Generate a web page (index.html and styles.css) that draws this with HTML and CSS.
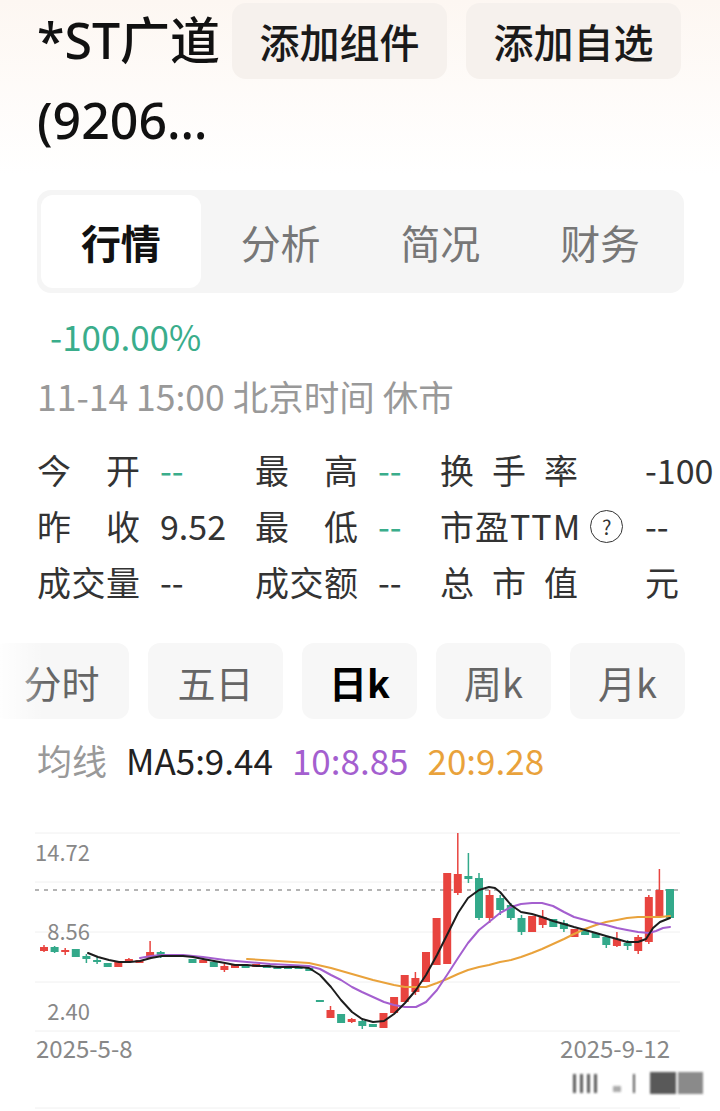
FILE: index.html
```html
<!DOCTYPE html>
<html>
    <head>
        <meta charset="utf-8">
        <title>*ST广道 行情</title>
        <link rel="stylesheet" href="styles.css">
    </head>
    <body>
        <div class="wrap">
            <div class="head">
                <div class="title" title="*ST广道(920680)">
                    <div class="name">*ST广道</div>
                    <div class="code">(9206…</div>
                </div>
                <div class="btn">添加组件</div>
                <div class="btn">添加自选</div>
            </div>

            <div class="tabs">
                <div class="tab on">行情</div>
                <div class="tab">分析</div>
                <div class="tab">简况</div>
                <div class="tab">财务</div>
            </div>

            <div class="change">-100.00%</div>
            <div class="time">11-14 15:00 北京时间 休市</div>

            <div class="stats">
                <span class="k">今开</span><span class="v down">--</span>
                <span class="k">最高</span><span class="v down">--</span>
                <span class="k k3">换手率</span><span class="v">-100</span>

                <span class="k">昨收</span><span class="v">9.52</span>
                <span class="k">最低</span><span class="v down">--</span>
                <span class="k k3 pe">市盈TTM<i class="help">?</i></span><span class="v">--</span>

                <span class="k">成交量</span><span class="v">--</span>
                <span class="k">成交额</span><span class="v">--</span>
                <span class="k k3">总市值</span><span class="v">元</span>
            </div>
        </div>

        <div class="periods">
            <div class="per wide">分时</div>
            <div class="per wide">五日</div>
            <div class="per on">日k</div>
            <div class="per">周k</div>
            <div class="per">月k</div>
        </div>

        <div class="ma">
            <span class="ma-label">均线</span>
            <span class="ma5">MA5:9.44</span>
            <span class="ma10">10:8.85</span>
            <span class="ma20">20:9.28</span>
        </div>

        <!-- chart drawn in page coordinates (viewBox starts at y=820) -->
        <svg class="chart" width="720" height="291" viewBox="0 820 720 291">
            <defs>
                <filter id="soft"><feGaussianBlur stdDeviation="1.3"/></filter>
            </defs>
            <g stroke="#f0f0f0" stroke-width="1">
                <line x1="35" y1="833" x2="680" y2="833"/>
                <line x1="35" y1="882" x2="680" y2="882"/>
                <line x1="35" y1="932" x2="680" y2="932"/>
                <line x1="35" y1="982" x2="680" y2="982"/>
                <line x1="35" y1="1031" x2="680" y2="1031"/>
                <line x1="35" y1="1108" x2="680" y2="1108"/>
            </g>
            <line x1="35" y1="890" x2="680" y2="890" stroke="#9c9c9c" stroke-width="1.5" stroke-dasharray="4 5"/>

            <g class="axis">
                <text x="90" y="861" text-anchor="end">14.72</text>
                <text x="90" y="940" text-anchor="end">8.56</text>
                <text x="90" y="1020" text-anchor="end">2.40</text>
                <text class="date" x="36" y="1058">2025-5-8</text>
                <text class="date" x="670" y="1058" text-anchor="end">2025-9-12</text>
            </g>

            <!-- rising candles -->
            <g fill="#e8443f" stroke="#e8443f" stroke-width="1.5">
                <line x1="44" y1="945" x2="44" y2="952"/><rect x="40" y="947" width="8" height="4" stroke="none"/>
                <line x1="65.2" y1="948" x2="65.2" y2="955"/><rect x="61.2" y="950" width="8" height="2" stroke="none"/>
                <rect x="114.3" y="962" width="8" height="5" stroke="none"/>
                <line x1="128.9" y1="958" x2="128.9" y2="963"/><rect x="124.9" y="959" width="8" height="3" stroke="none"/>
                <rect x="135.5" y="960" width="8" height="3" stroke="none"/>
                <line x1="150.1" y1="941" x2="150.1" y2="958"/><rect x="146.1" y="952" width="8" height="6" stroke="none"/>
                <rect x="177.9" y="955" width="8" height="2" stroke="none"/>
                <rect x="199.2" y="960" width="8" height="3" stroke="none"/>
                <line x1="224.4" y1="964" x2="224.4" y2="972"/><rect x="220.4" y="966" width="8" height="4" stroke="none"/>
                <rect x="231" y="965" width="8" height="3" stroke="none"/>
                <rect x="252.2" y="964" width="8" height="3" stroke="none"/>
                <line x1="330.5" y1="1006" x2="330.5" y2="1018"/><rect x="326.5" y="1010" width="8" height="8" stroke="none"/>
                <line x1="351.7" y1="1018" x2="351.7" y2="1023"/><rect x="347.7" y="1019" width="8" height="3" stroke="none"/>
                <rect x="379.5" y="1013" width="8" height="15" stroke="none"/>
                <rect x="390.1" y="997" width="8" height="16" stroke="none"/>
                <rect x="400.7" y="975" width="8" height="27" stroke="none"/>
                <line x1="415.4" y1="972" x2="415.4" y2="995"/><rect x="411.4" y="978" width="8" height="14" stroke="none"/>
                <rect x="422" y="952" width="8" height="30" stroke="none"/>
                <rect x="432.6" y="918" width="8" height="47" stroke="none"/>
                <rect x="443.2" y="873" width="8" height="91" stroke="none"/>
                <line x1="457.8" y1="833" x2="457.8" y2="895"/><rect x="453.8" y="874" width="8" height="19" stroke="none"/>
                <line x1="489.6" y1="890" x2="489.6" y2="923"/><rect x="485.6" y="895" width="8" height="23" stroke="none"/>
                <rect x="528.1" y="916" width="8" height="16" stroke="none"/>
                <line x1="542.7" y1="910" x2="542.7" y2="928"/><rect x="538.7" y="917" width="8" height="8" stroke="none"/>
                <rect x="570.5" y="929" width="8" height="8" stroke="none"/>
                <line x1="616.9" y1="932" x2="616.9" y2="947"/><rect x="612.9" y="939" width="8" height="7" stroke="none"/>
                <line x1="638.2" y1="935" x2="638.2" y2="954"/><rect x="634.2" y="937" width="8" height="14" stroke="none"/>
                <line x1="648.8" y1="895" x2="648.8" y2="944"/><rect x="644.8" y="897" width="8" height="45" stroke="none"/>
                <line x1="659.4" y1="869" x2="659.4" y2="916"/><rect x="655.4" y="890" width="8" height="26" stroke="none"/>
            </g>

            <!-- falling candles -->
            <g fill="#33a98a" stroke="#33a98a" stroke-width="1.5">
                <line x1="54.6" y1="946" x2="54.6" y2="953"/><rect x="50.6" y="947" width="8" height="5" stroke="none"/>
                <rect x="71.8" y="949" width="8" height="8" stroke="none"/>
                <line x1="86.4" y1="954" x2="86.4" y2="963"/><rect x="82.4" y="956" width="8" height="3" stroke="none"/>
                <line x1="97.1" y1="957" x2="97.1" y2="964"/><rect x="93.1" y="960" width="8" height="2" stroke="none"/>
                <rect x="103.7" y="963" width="8" height="4" stroke="none"/>
                <line x1="160.7" y1="951" x2="160.7" y2="958"/><rect x="156.7" y="952" width="8" height="5" stroke="none"/>
                <rect x="167.3" y="955" width="8" height="2" stroke="none"/>
                <rect x="188.5" y="959" width="8" height="4" stroke="none"/>
                <rect x="209.8" y="962" width="8" height="5" stroke="none"/>
                <rect x="241.6" y="965" width="8" height="3" stroke="none"/>
                <rect x="262.8" y="965" width="8" height="3" stroke="none"/>
                <rect x="273.4" y="967" width="8" height="2" stroke="none"/>
                <rect x="284" y="967" width="8" height="2" stroke="none"/>
                <rect x="294.6" y="967" width="8" height="2" stroke="none"/>
                <rect x="305.3" y="968" width="8" height="3" stroke="none"/>
                <rect x="315.9" y="1000" width="8" height="2" stroke="none"/>
                <rect x="337.1" y="1014" width="8" height="9" stroke="none"/>
                <line x1="362.3" y1="1020" x2="362.3" y2="1029"/><rect x="358.3" y="1021" width="8" height="5" stroke="none"/>
                <rect x="368.9" y="1024" width="8" height="3" stroke="none"/>
                <line x1="468.4" y1="853" x2="468.4" y2="883"/><rect x="464.4" y="876" width="8" height="3" stroke="none"/>
                <line x1="479" y1="873" x2="479" y2="920"/><rect x="475" y="878" width="8" height="40" stroke="none"/>
                <line x1="500.2" y1="895" x2="500.2" y2="915"/><rect x="496.2" y="898" width="8" height="12" stroke="none"/>
                <line x1="510.8" y1="903" x2="510.8" y2="920"/><rect x="506.8" y="905" width="8" height="13" stroke="none"/>
                <line x1="521.5" y1="915" x2="521.5" y2="935"/><rect x="517.5" y="918" width="8" height="14" stroke="none"/>
                <rect x="549.3" y="919" width="8" height="8" stroke="none"/>
                <line x1="563.9" y1="920" x2="563.9" y2="932"/><rect x="559.9" y="923" width="8" height="6" stroke="none"/>
                <rect x="581.1" y="930" width="8" height="5" stroke="none"/>
                <rect x="591.7" y="933" width="8" height="5" stroke="none"/>
                <line x1="606.3" y1="935" x2="606.3" y2="948"/><rect x="602.3" y="937" width="8" height="8" stroke="none"/>
                <line x1="627.6" y1="940" x2="627.6" y2="950"/><rect x="623.6" y="943" width="8" height="3" stroke="none"/>
                <rect x="666" y="889" width="8" height="29" stroke="none"/>
            </g>

            <g fill="none" stroke-width="2" stroke-linejoin="round" stroke-linecap="round">
                <polyline stroke="#e9a23b" points="247,959 278,961 309,963 331,968 352,974 373,980 394,985 405,987 426,987 437,983 447,979 458,974 468,970 479,967 489,965 500,962 511,960 521,957 532,953 542,949 553,944 564,939 574,934 585,929 596,925 606,922 617,920 627,918 638,917 649,917 660,917 670,916"/>
                <polyline stroke="#a45fcf" points="140,958 151,956 162,955 183,955 203,957 225,960 247,962 270,964 290,965 309,966 320,969 331,975 341,980 352,987 362,992 373,997 384,1002 394,1005 405,1007 416,1007 426,1002 437,990 447,975 458,958 468,943 479,930 489,922 500,913 511,907 521,904 532,903 542,903 553,906 564,912 574,917 585,920 596,923 606,925 617,928 627,930 638,932 649,933 656,931 663,928 670,927"/>
                <polyline stroke="#1d1d1d" points="88,953 98,957 109,960 119,962 130,962 140,961 151,958 162,956 172,956 183,956 193,957 203,959 214,961 225,963 235,965 247,965 257,966 267,966 278,967 288,967 298,967 309,968 320,975 331,987 341,1000 352,1012 362,1019 373,1022 384,1021 394,1014 405,1003 416,990 426,975 437,955 447,935 458,913 468,898 479,890 489,887 495,888 500,892 511,905 521,912 532,914 542,917 553,921 564,924 574,927 585,930 596,933 606,936 617,939 627,942 638,942 646,939 653,928 660,922 670,918"/>
            </g>

            <!-- blurred watermark -->
            <g fill="#3c3c3c" filter="url(#soft)" opacity="0.85">
                <rect x="573" y="1074" width="3" height="19"/>
                <rect x="580" y="1074" width="3" height="19"/>
                <rect x="587" y="1074" width="3" height="19"/>
                <rect x="594" y="1074" width="3" height="19"/>
                <rect x="613" y="1086" width="8" height="6" opacity="0.5"/>
                <rect x="633" y="1074" width="2" height="19"/>
                <rect x="650" y="1072" width="26" height="22"/>
                <rect x="678" y="1072" width="25" height="22" opacity="0.7"/>
            </g>
        </svg>
    </body>
</html>
```

FILE: styles.css
```css
body {
    margin: 0;
    width: 720px;
    overflow: hidden;
    font-family: "Noto Sans CJK SC", "Noto Sans", sans-serif;
    color: #222;
    background: #fff linear-gradient(#fdf7f2, #fff 175px) no-repeat;
}
.wrap {
    padding: 0 36px 0 37px;
}
.head {
    display: flex;
    height: 160px;
}
.title {
    width: 195px;
    font-family: "Noto Sans", "Noto Sans CJK SC", sans-serif;
    font-size: 50px;
    font-weight: 500;
    line-height: 80px;
    color: #111;
    white-space: nowrap;
}
.btn {
    width: 215px;
    height: 76px;
    margin: 3px 19px 0 0;
    border-radius: 14px;
    background: #f6f1ed;
    font-size: 40px;
    font-weight: 500;
    color: #1a1a1a;
    display: flex;
    align-items: center;
    justify-content: center;
}
.btn:last-child {
    margin-right: 0;
}
.tabs {
    margin-top: 30px;
    height: 103px;
    padding: 5px 4px;
    box-sizing: border-box;
    border-radius: 14px;
    background: #f5f5f5;
    display: flex;
}
.tab {
    flex: 1;
    border-radius: 12px;
    font-size: 40px;
    color: #777;
    display: flex;
    align-items: center;
    justify-content: center;
}
.tab.on {
    background: #fff;
    color: #111;
    font-weight: 700;
}
.change {
    margin: 21px 0 0 13px;
    font-size: 35px;
    line-height: 44px;
    color: #3aad8b;
}
.time {
    margin-top: 16px;
    font-size: 35.5px;
    line-height: 44px;
    color: #999;
}
.stats {
    margin-top: 24px;
    display: grid;
    grid-template-columns: 123px 95px 123px 62px 205px auto;
    font-size: 34px;
    line-height: 56px;
    color: #333;
    white-space: nowrap;
}
.k {
    width: 103px;
    text-align: justify;
    text-align-last: justify;
}
.k3 {
    width: 138px;
}
.pe {
    display: flex;
    align-items: center;
    width: auto;
    letter-spacing: 1px;
    text-align-last: auto;
}
.help {
    width: 31px;
    height: 31px;
    margin-left: 9px;
    border: 1.5px solid #333;
    border-radius: 50%;
    font-size: 20px;
    font-style: normal;
    line-height: 31px;
    letter-spacing: 0;
    text-align: center;
}
.down {
    color: #3aad8b;
}
.periods {
    position: relative;
    margin: 33px 0 0 -6px;
    display: flex;
    gap: 19px;
}
.periods::before {
    content: "";
    position: absolute;
    left: 0;
    top: 0;
    width: 50px;
    height: 100%;
    background: linear-gradient(90deg, #fff, rgba(255, 255, 255, 0));
}
.per {
    width: 115px;
    height: 76px;
    border-radius: 12px;
    background: #f7f7f7;
    font-size: 38px;
    color: #666;
    display: flex;
    align-items: center;
    justify-content: center;
}
.per.wide {
    width: 135px;
}
.per.on {
    color: #000;
    font-weight: 700;
}
.ma {
    margin: 21px 0 0 37px;
    font-size: 35px;
    line-height: 40px;
    display: flex;
    gap: 19px;
}
.ma-label {
    color: #999;
}
.ma5 {
    color: #222;
}
.ma10 {
    color: #a45fcf;
}
.ma20 {
    color: #e9a23b;
}
.chart {
    display: block;
    margin-top: 40px;
}
.axis {
    font-family: "Noto Sans CJK SC", "Noto Sans", sans-serif;
    font-size: 22px;
    fill: #888;
}
.axis .date {
    font-size: 24px;
}
```
